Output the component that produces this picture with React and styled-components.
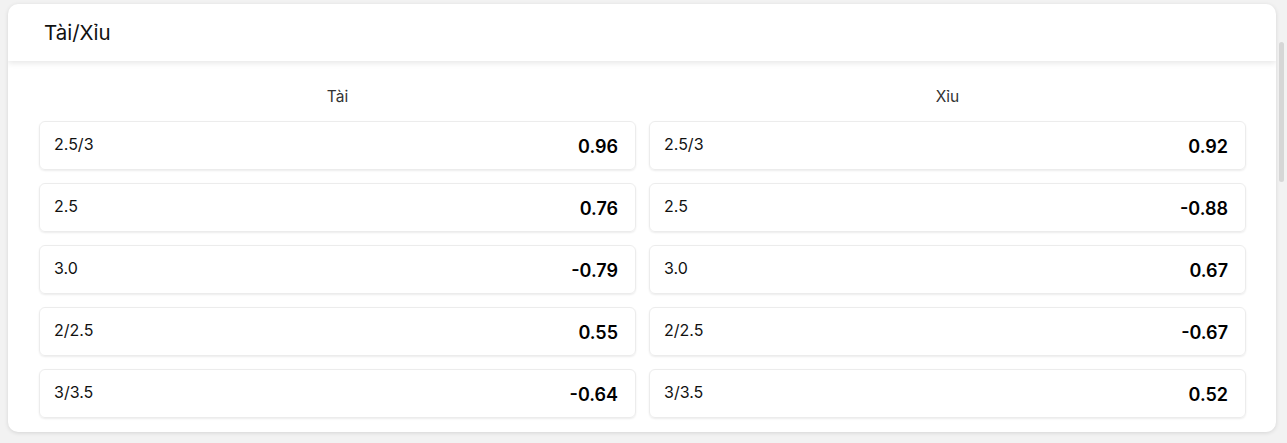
import styled, { createGlobalStyle } from 'styled-components';

const GlobalStyle = createGlobalStyle`
  html, body {
    margin: 0;
    background: #f2f2f2;
    font-family: Inter, "Noto Sans", Arial, sans-serif;
    color: #111;
  }
  * { box-sizing: border-box; }
`;

const tai = [
    { line: '2.5/3', odd: '0.96' },
    { line: '2.5', odd: '0.76' },
    { line: '3.0', odd: '-0.79' },
    { line: '2/2.5', odd: '0.55' },
    { line: '3/3.5', odd: '-0.64' },
];

const xiu = [
    { line: '2.5/3', odd: '0.92' },
    { line: '2.5', odd: '-0.88' },
    { line: '3.0', odd: '0.67' },
    { line: '2/2.5', odd: '-0.67' },
    { line: '3/3.5', odd: '0.52' },
];

const App = () => {
    return (
        <Page>
            <GlobalStyle />
            <Card>
                <Header>Tài/Xỉu</Header>
                <Body>
                    <Column title="Tài" rows={tai} />
                    <Column title="Xỉu" rows={xiu} />
                </Body>
            </Card>
            <ScrollThumb />
        </Page>
    );
}

const Column = ({ title, rows }) => (
    <Col>
        <ColTitle>{title}</ColTitle>
        {rows.map((r) => (
            <Row key={r.line}>
                <Line>{r.line}</Line>
                <Odd>{r.odd}</Odd>
            </Row>
        ))}
    </Col>
);

const Page = styled.div`
padding: 4px 11px 9px 8px;
`;

const Card = styled.div`
background: #fff;
border-radius: 10px;
box-shadow: 0 1px 4px rgba(0, 0, 0, 0.12);
overflow: hidden;
`;

const Header = styled.div`
height: 57px;
display: flex;
align-items: center;
padding-left: 36px;
font-size: 20.5px;
color: #111;
position: relative;
z-index: 1;
box-shadow: 0 2px 6px rgba(0, 0, 0, 0.1);
`;

const Body = styled.div`
display: grid;
grid-template-columns: 1fr 1fr;
gap: 13px;
padding: 18px 30px 14px 31px;
`;

const Col = styled.div`
display: flex;
flex-direction: column;
gap: 13px;
`;

const ColTitle = styled.div`
text-align: center;
font-size: 15.5px;
color: #333;
height: 29px;
line-height: 36px;
`;

const Row = styled.div`
height: 49px;
border: 1px solid #ececec;
border-radius: 6px;
box-shadow: 0 1px 2px rgba(0, 0, 0, 0.08);
display: flex;
align-items: center;
justify-content: space-between;
padding: 0 17px 0 14px;
`;

const Line = styled.span`
font-size: 16px;
color: #111;
margin-top: -4px;
`;

const Odd = styled.span`
font-size: 18px;
font-weight: 600;
color: #000;
margin-top: 2px;
`;

const ScrollThumb = styled.div`
position: fixed;
top: 42px;
right: 3px;
width: 5px;
height: 140px;
border-radius: 3px;
background: #d6d6d6;
`;

export default App;
